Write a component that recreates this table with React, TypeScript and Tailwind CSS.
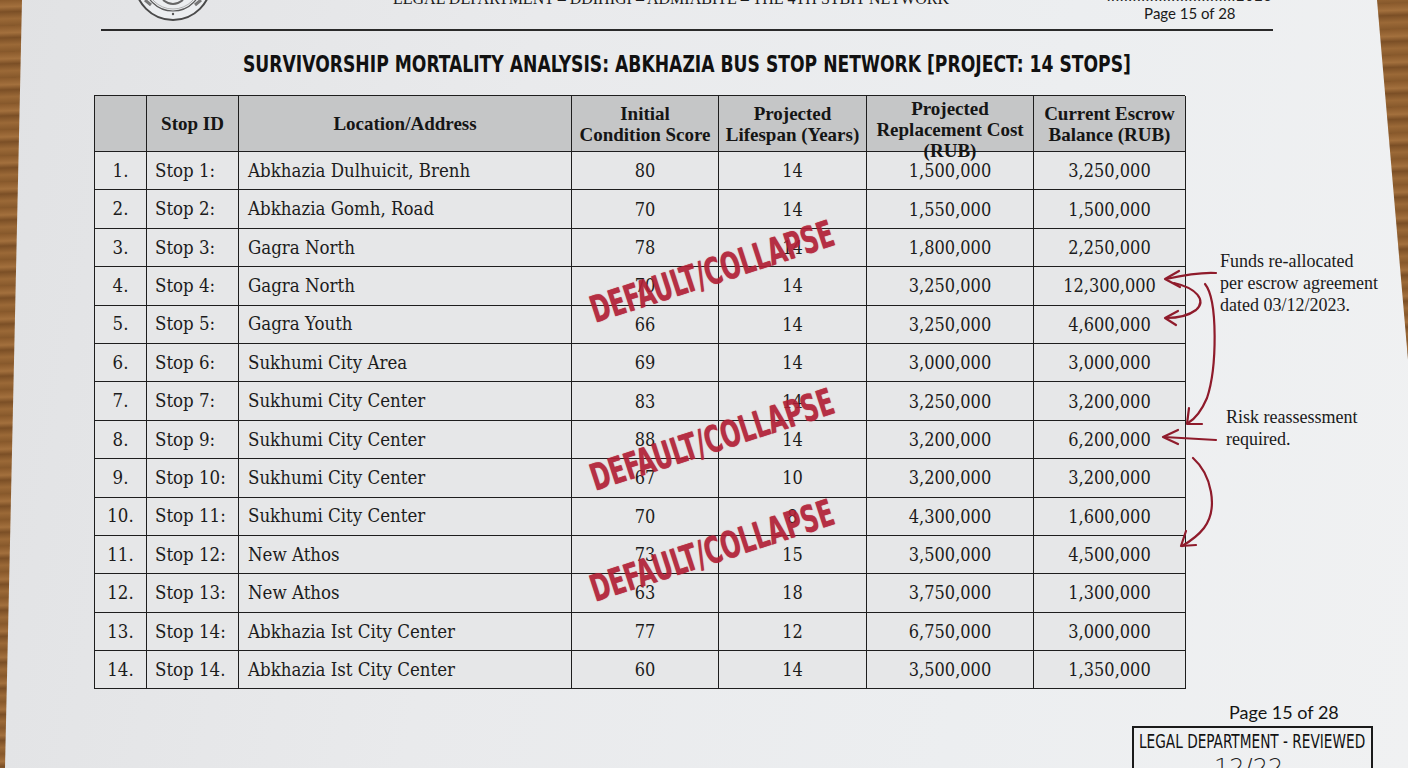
import React from 'react';

const rows: string[][] = [
  ['1.', 'Stop 1:', 'Abkhazia Dulhuicit, Brenh', '80', '14', '1,500,000', '3,250,000'],
  ['2.', 'Stop 2:', 'Abkhazia Gomh, Road', '70', '14', '1,550,000', '1,500,000'],
  ['3.', 'Stop 3:', 'Gagra North', '78', '14', '1,800,000', '2,250,000'],
  ['4.', 'Stop 4:', 'Gagra North', '70', '14', '3,250,000', '12,300,000'],
  ['5.', 'Stop 5:', 'Gagra Youth', '66', '14', '3,250,000', '4,600,000'],
  ['6.', 'Stop 6:', 'Sukhumi City Area', '69', '14', '3,000,000', '3,000,000'],
  ['7.', 'Stop 7:', 'Sukhumi City Center', '83', '14', '3,250,000', '3,200,000'],
  ['8.', 'Stop 9:', 'Sukhumi City Center', '88', '14', '3,200,000', '6,200,000'],
  ['9.', 'Stop 10:', 'Sukhumi City Center', '67', '10', '3,200,000', '3,200,000'],
  ['10.', 'Stop 11:', 'Sukhumi City Center', '70', '8', '4,300,000', '1,600,000'],
  ['11.', 'Stop 12:', 'New Athos', '73', '15', '3,500,000', '4,500,000'],
  ['12.', 'Stop 13:', 'New Athos', '63', '18', '3,750,000', '1,300,000'],
  ['13.', 'Stop 14:', 'Abkhazia Ist City Center', '77', '12', '6,750,000', '3,000,000'],
  ['14.', 'Stop 14.', 'Abkhazia Ist City Center', '60', '14', '3,500,000', '1,350,000'],
];

const cellFont = "font-['DejaVu_Serif_Condensed','DejaVu_Serif',serif] text-[18px] text-[#1c1c1c]";
const textFont = "font-['DejaVu_Serif_Condensed','DejaVu_Serif',serif] text-[18.5px] text-[#1c1c1c]";
const headFont = "font-['Liberation_Serif',serif] font-bold text-[19px] leading-[21px] text-[#151515]";
const edge = 'border-r-[1.5px] border-b-[1.5px] border-[#1e1e1e] flex items-center';
const cell = `${edge} bg-[#e6e7e8] h-[38.4px]`;
const head = `${edge} bg-[#c5c6c7] h-[56px] justify-center text-center ${headFont}`;
const narrow = "font-['DejaVu_Sans_Condensed',sans-serif]";

const Stamp = ({ pos }: { pos: string }) => (
  <div
    className={`absolute ${pos} -translate-x-1/2 -translate-y-1/2 -rotate-[18deg] scale-x-[0.7] whitespace-nowrap ${narrow} font-bold text-[37px] leading-none text-[#b01c33] opacity-90 [text-shadow:0_0_1px_#c0303f]`}
  >
    DEFAULT/COLLAPSE
  </div>
);

export default function App() {
  return (
    <div className="relative w-[1408px] h-[768px] overflow-hidden bg-[repeating-linear-gradient(178deg,#8a5a2c_0px,#a3703d_7px,#7b4f26_12px,#9b6937_19px,#86582b_26px)]">
      <div className="absolute inset-0 [clip-path:polygon(22px_0,1377px_0,1408px_360px,1408px_768px,5px_768px)] bg-[linear-gradient(100deg,#e1e2e4_0%,#e9eaec_35%,#eceef0_70%,#f0f1f2_100%)]">
        {/* running header */}
        <div className="flex items-start h-[29px]">
          <div className="ml-[133px] -mt-[58px] w-[80px] h-[80px] shrink-0">
            <svg width="80" height="80" viewBox="0 0 80 80">
              <circle cx="40" cy="40" r="38" fill="#eceef0" stroke="#4a4a4a" strokeWidth="2" />
              <circle cx="40" cy="40" r="29" fill="none" stroke="#5a5a5a" strokeWidth="1.2" />
              <circle cx="40" cy="40" r="27" fill="none" stroke="#888" strokeWidth="0.6" />
              <path d="M30 58 Q40 66 50 58" fill="none" stroke="#666" strokeWidth="2" />
              <path d="M12 58 L18 63 M62 63 L68 58" stroke="#777" strokeWidth="3" />
              <circle cx="40" cy="72" r="1.2" fill="#555" />
            </svg>
          </div>
          <div className="ml-[180px] -mt-[11px] whitespace-nowrap font-['Liberation_Serif',serif] text-[16px] leading-[20px] text-[#1a1a1a]">
            LEGAL DEPARTMENT – DDIHIGI – ADMIABITE – THE 4TH STBIT NETWORK
          </div>
          <div className="ml-[158px] -mt-[12px] flex flex-col items-center">
            <div className="font-['Lato',sans-serif] text-[14px] leading-[16px] text-[#222] tracking-[1px]">
              ..............................2023
            </div>
            <div className="font-['Lato',sans-serif] text-[15px] leading-[18px] text-[#1a1a1a]">Page 15 of 28</div>
          </div>
        </div>
        <div className="ml-[101px] w-[1172px] h-[2px] bg-[#2a2a2a]" />

        {/* title */}
        <div className={`ml-[243px] mt-[19px] w-fit origin-left scale-x-[0.83] whitespace-nowrap ${narrow} font-bold text-[23px] leading-[28px] text-[#111]`}>
          SURVIVORSHIP MORTALITY ANALYSIS: ABKHAZIA BUS STOP NETWORK [PROJECT: 14 STOPS]
        </div>

        {/* table + margin notes */}
        <div className="flex mt-[17px]">
          <div className="relative ml-[94px] w-[1091px] border-l-[1.5px] border-t-[1.5px] border-[#1e1e1e] grid grid-cols-[52px_92px_333px_147px_148px_167px_152px]">
            <div className={head} />
            <div className={head}>Stop ID</div>
            <div className={head}>Location/Address</div>
            <div className={head}>
              Initial
              <br />
              Condition Score
            </div>
            <div className={head}>
              Projected
              <br />
              Lifespan (Years)
            </div>
            <div className={head}>
              <span className="relative z-10 translate-y-[6px]">
                Projected
                <br />
                Replacement Cost
                <br />
                (RUB)
              </span>
            </div>
            <div className={head}>
              Current Escrow
              <br />
              Balance (RUB)
            </div>

            {rows.map((r, i) => (
              <React.Fragment key={i}>
                <div className={`${cell} justify-center ${textFont}`}>{r[0]}</div>
                <div className={`${cell} pl-[8px] ${textFont}`}>{r[1]}</div>
                <div className={`${cell} pl-[9px] ${textFont}`}>{r[2]}</div>
                <div className={`${cell} justify-center ${cellFont}`}>{r[3]}</div>
                <div className={`${cell} justify-center ${cellFont}`}>{r[4]}</div>
                <div className={`${cell} justify-center ${cellFont}`}>{r[5]}</div>
                <div className={`${cell} justify-center ${cellFont}`}>{r[6]}</div>
              </React.Fragment>
            ))}

            <Stamp pos="left-[617px] top-[176px]" />
            <Stamp pos="left-[617px] top-[344px]" />
            <Stamp pos="left-[617px] top-[455px]" />
          </div>

          <div className="ml-[35px] pt-[155px] font-['Liberation_Serif',serif] text-[18px] leading-[22px] text-[#1a1a1a] whitespace-nowrap">
            <div>
              Funds re-allocated
              <br />
              per escrow agreement
              <br />
              dated 03/12/2023.
            </div>
            <div className="ml-[6px] mt-[90px]">
              Risk reassessment
              <br />
              required.
            </div>
          </div>
        </div>

        {/* footer */}
        <div className="ml-[1229px] mt-[12px] font-['Lato',sans-serif] text-[18px] leading-[22px] text-[#141414]">Page 15 of 28</div>
        <div className="ml-[1132px] mt-[3px] w-[241px] h-[60px] border-2 border-[#1a1a1a] px-[5px]">
          <div className={`origin-left scale-x-[0.76] ${narrow} text-[20px] leading-[26px] text-[#111] whitespace-nowrap`}>
            LEGAL DEPARTMENT - REVIEWED
          </div>
          <div className="ml-[75px] font-['DejaVu_Sans',sans-serif] font-light text-[24px] leading-[28px] text-[#222]">12/22</div>
        </div>
      </div>

      {/* red pen marks */}
      <svg className="absolute inset-0 pointer-events-none" width="1408" height="768" viewBox="0 0 1408 768">
        <g fill="none" stroke="#8f1b2b" strokeWidth="2.2" strokeLinecap="round" strokeLinejoin="round">
          <path d="M1216 273 C1200 272 1184 275 1166 279" />
          <path d="M1179 271 L1165 279 L1180 287" />
          <path d="M1174 283 C1196 288 1207 300 1196 310 C1188 316 1176 318 1166 318" />
          <path d="M1178 311 L1165 318 L1176 325" />
          <path d="M1205 284 C1218 300 1217 368 1207 398 C1201 412 1195 419 1188 423" />
          <path d="M1189 408 L1187 424 L1202 424" />
          <path d="M1216 440 C1200 439 1182 438 1164 437" />
          <path d="M1178 430 L1163 437 L1178 444" />
          <path d="M1193 458 C1211 474 1219 508 1204 528 C1197 537 1189 542 1182 546" />
          <path d="M1186 531 L1181 546 L1196 545" />
        </g>
      </svg>
    </div>
  );
}
